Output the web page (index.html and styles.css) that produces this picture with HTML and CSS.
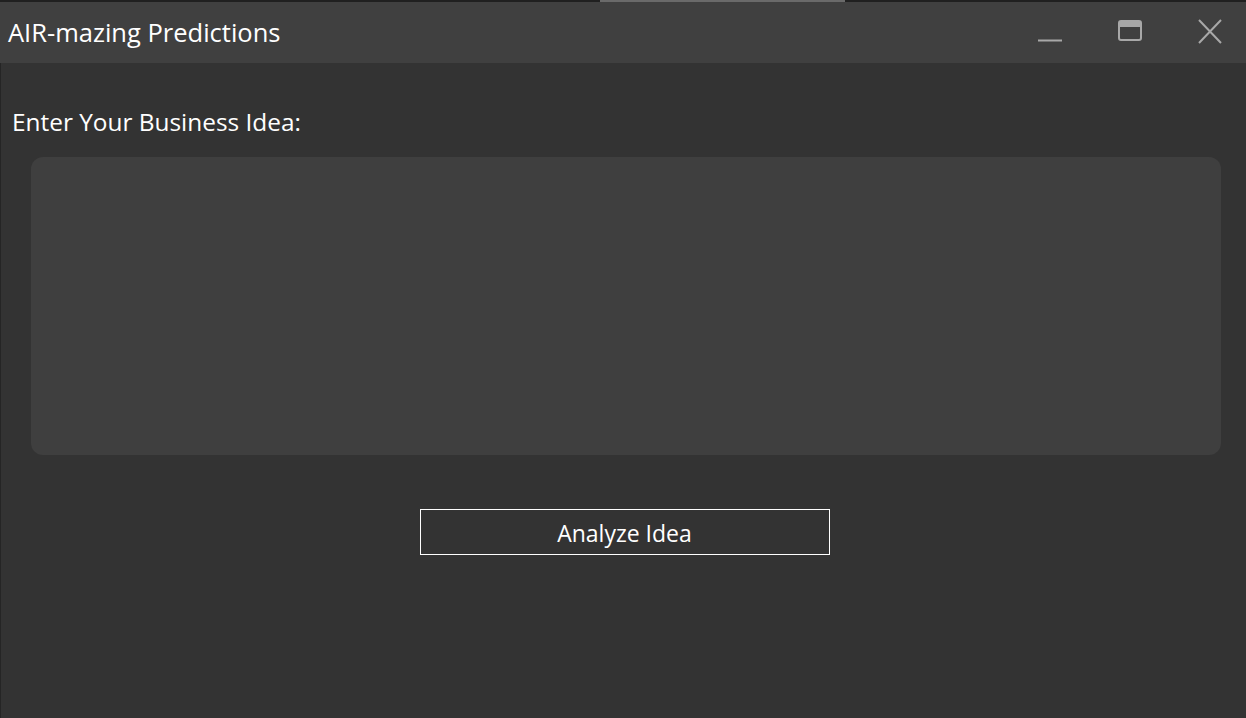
FILE: index.html
```html
<!DOCTYPE html>
<html>
<head>
<meta charset="utf-8">
<link rel="stylesheet" href="styles.css">
</head>
<body>
<div class="window">
  <div class="topedge"><span class="accent"></span></div>
  <header class="titlebar">
    <div class="title">AIR-mazing Predictions</div>
    <div class="controls">
      <span class="ctl"><svg width="26" height="26" viewBox="0 0 26 26"><line x1="1" y1="21.5" x2="25" y2="21.5" stroke="#a8a8a8" stroke-width="2"/></svg></span>
      <span class="ctl"><svg width="26" height="26" viewBox="0 0 26 26"><rect x="2" y="2" width="22" height="19" rx="2" fill="none" stroke="#a8a8a8" stroke-width="2"/><rect x="2" y="2" width="22" height="6" fill="#a8a8a8"/></svg></span>
      <span class="ctl"><svg width="26" height="26" viewBox="0 0 26 26"><path d="M2 1 L24 24 M24 1 L2 24" stroke="#a8a8a8" stroke-width="2" fill="none"/></svg></span>
    </div>
  </header>
  <main class="content">
    <label class="label">Enter Your Business Idea:</label>
    <div class="inputbox"></div>
    <div class="actions"><button class="btn">Analyze Idea</button></div>
  </main>
</div>
</body>
</html>
```
FILE: styles.css
```css
html, body {
  margin: 0;
  padding: 0;
  background: #333333;
  width: 1246px;
  height: 718px;
  overflow: hidden;
}
.window {
  display: flex;
  flex-direction: column;
  height: 718px;
  font-family: "Open Sans", "Noto Sans", sans-serif;
  color: #ffffff;
}
.topedge {
  height: 2px;
  background: #202020;
  display: flex;
}
.accent {
  margin-left: 600px;
  width: 245px;
  height: 2px;
  background: #6a6a6a;
}
.titlebar {
  height: 61px;
  background: #404040;
  display: flex;
  align-items: center;
  justify-content: space-between;
}
.title {
  padding-left: 8px;
  font-size: 25.5px;
  margin-top: -1px;
}
.controls {
  display: flex;
  align-items: center;
  gap: 54px;
  padding-right: 23px;
  margin-top: -2px;
}
.ctl { display: flex; width: 26px; height: 26px; }
.content {
  flex: 1;
  border-left: 1px solid #252525;
  display: flex;
  flex-direction: column;
}
.label {
  font-size: 24.4px;
  padding: 43px 0 0 11px;
  line-height: 32px;
}
.inputbox {
  margin: 19px 25px 0 30px;
  height: 298px;
  background: #3f3f3f;
  border-radius: 12px;
}
.actions {
  display: flex;
  justify-content: center;
  padding-top: 54px;
  padding-left: 2px;
}
.btn {
  width: 410px;
  height: 46px;
  background: transparent;
  border: 1px solid #ffffff;
  color: #ffffff;
  font-family: "Open Sans", "Noto Sans", sans-serif;
  font-size: 23px;
  padding: 2px 0 0 0;
}
```
